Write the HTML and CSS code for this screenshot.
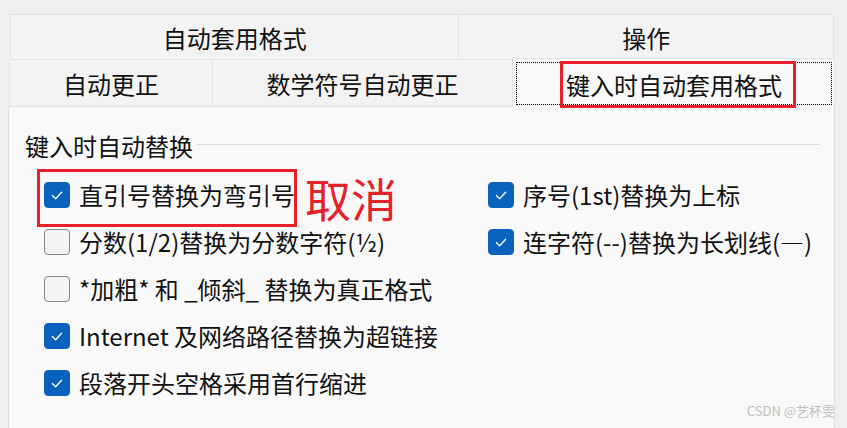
FILE: index.html
```html
<!DOCTYPE html>
<html lang="zh-CN">
<head>
<meta charset="utf-8">
<link rel="stylesheet" href="styles.css">
</head>
<body>
<div class="dialog">
  <div class="tabrow row1">
    <div class="tab t-fmt">自动套用格式</div>
    <div class="tab t-act">操作</div>
  </div>
  <div class="tabrow row2">
    <div class="tab t-auto">自动更正</div>
    <div class="tab t-math">数学符号自动更正</div>
    <div class="tab t-sel">
      <div class="focus">键入时自动套用格式</div>
      <div class="redbox tabmark"></div>
    </div>
  </div>
  <div class="panel">
    <div class="group">
      <span class="glabel">键入时自动替换</span>
      <span class="gline"></span>
    </div>
    <div class="items">
      <div class="col">
        <label class="item"><span class="cb on"><svg viewBox="0 0 26 26"><polyline points="8,13.5 11.5,17 18,10"/></svg></span>直引号替换为弯引号</label>
        <label class="item"><span class="cb"></span>分数(1/2)替换为分数字符(½)</label>
        <label class="item"><span class="cb"></span>*加粗* 和 _倾斜_ 替换为真正格式</label>
        <label class="item"><span class="cb on"><svg viewBox="0 0 26 26"><polyline points="8,13.5 11.5,17 18,10"/></svg></span>Internet 及网络路径替换为超链接</label>
        <label class="item"><span class="cb on"><svg viewBox="0 0 26 26"><polyline points="8,13.5 11.5,17 18,10"/></svg></span>段落开头空格采用首行缩进</label>
      </div>
      <div class="col">
        <label class="item"><span class="cb on"><svg viewBox="0 0 26 26"><polyline points="8,13.5 11.5,17 18,10"/></svg></span>序号(1st)替换为上标</label>
        <label class="item"><span class="cb on"><svg viewBox="0 0 26 26"><polyline points="8,13.5 11.5,17 18,10"/></svg></span>连字符(--)替换为长划线(—)</label>
      </div>
    </div>
    <div class="redbox itemmark"></div>
    <div class="cancel">取消</div>
  </div>
</div>
<div class="watermark">CSDN @艺杯雯</div>
</body>
</html>
```

FILE: styles.css
```css
html, body {
  margin: 0;
  padding: 0;
}
body {
  width: 847px;
  height: 428px;
  overflow: hidden;
  background: #efefef;
  font-family: "Noto Sans CJK SC", "Noto Sans", sans-serif;
  color: #111;
  position: relative;
}
.dialog {
  padding: 14px 0 0 8px;
  width: 827px;
}
.tabrow {
  display: flex;
}
.tab {
  box-sizing: border-box;
  background: #f3f3f3;
  border: 1px solid #e2e2e2;
  display: flex;
  align-items: center;
  justify-content: center;
  font-size: 24px;
  line-height: 1;
  padding-top: 2px;
}
.row1 {
  height: 46px;
  margin: 0 1px 0 2px;
}
.t-fmt { width: 450px; }
.t-act { width: 376px; margin-left: -1px; }
.row2 {
  height: 49px;
  margin-top: -2px;
  margin-bottom: -1px;
  align-items: flex-end;
  margin-left: 1px;
}
.t-auto { width: 204px; height: 47px; border-top: none; }
.t-math { width: 301px; height: 47px; margin-left: -1px; border-top: none; }
.t-sel {
  width: 323px;
  height: 49px;
  margin-left: -1px;
  background: #f9f9f9;
  border-bottom: none;
  border-color: #e2e2e2;
  position: relative;
  z-index: 1;
  padding: 3px 2px 2px 3px;
}
.focus {
  box-sizing: border-box;
  width: 100%;
  height: 100%;
  border: 1px dotted #000;
  display: flex;
  align-items: center;
  justify-content: center;
  padding-top: 2px;
}
.redbox {
  position: absolute;
  border: 3px solid #e8202a;
  box-sizing: border-box;
}
.tabmark {
  left: 47px;
  top: 2px;
  width: 236px;
  height: 47px;
}
.panel {
  box-sizing: border-box;
  position: relative;
  height: 330px;
  background: #f9f9f9;
  border: 1px solid #e0e0e0;
  border-bottom: none;
  padding: 22px 14px 0 16px;
}
.group {
  display: flex;
  align-items: center;
  height: 32px;
}
.glabel {
  font-size: 24px;
  line-height: 32px;
  padding-top: 2px;
}
.gline {
  flex: 1;
  height: 1px;
  background: #dcdcdc;
  margin-left: 4px;
  margin-top: -2px;
}
.items {
  display: grid;
  grid-template-columns: 444px 1fr;
  margin: 10px 0 0 19px;
}
.col {
  display: flex;
  flex-direction: column;
}
.item {
  display: flex;
  align-items: center;
  height: 47px;
  font-size: 24px;
  white-space: nowrap;
}
.cb {
  box-sizing: border-box;
  width: 26px;
  height: 26px;
  border-radius: 4px;
  border: 1px solid #858585;
  background: #f4f4f4;
  margin-right: 9px;
  display: flex;
  flex-shrink: 0;
}
.cb.on {
  background: #0a62bf;
  border-color: #0a62bf;
}
.cb svg {
  width: 100%;
  height: 100%;
}
.cb polyline {
  fill: none;
  stroke: #fff;
  stroke-width: 1.4;
  stroke-linecap: round;
  stroke-linejoin: round;
}
.itemmark {
  left: 28px;
  top: 62px;
  width: 260px;
  height: 58px;
}
.cancel {
  position: absolute;
  left: 296px;
  top: 60px;
  font-size: 46px;
  line-height: 60px;
  color: #e52129;
}
.watermark {
  position: absolute;
  right: 12px;
  top: 402px;
  font-size: 13px;
  line-height: 18px;
  color: #c0c0c0;
}
```
